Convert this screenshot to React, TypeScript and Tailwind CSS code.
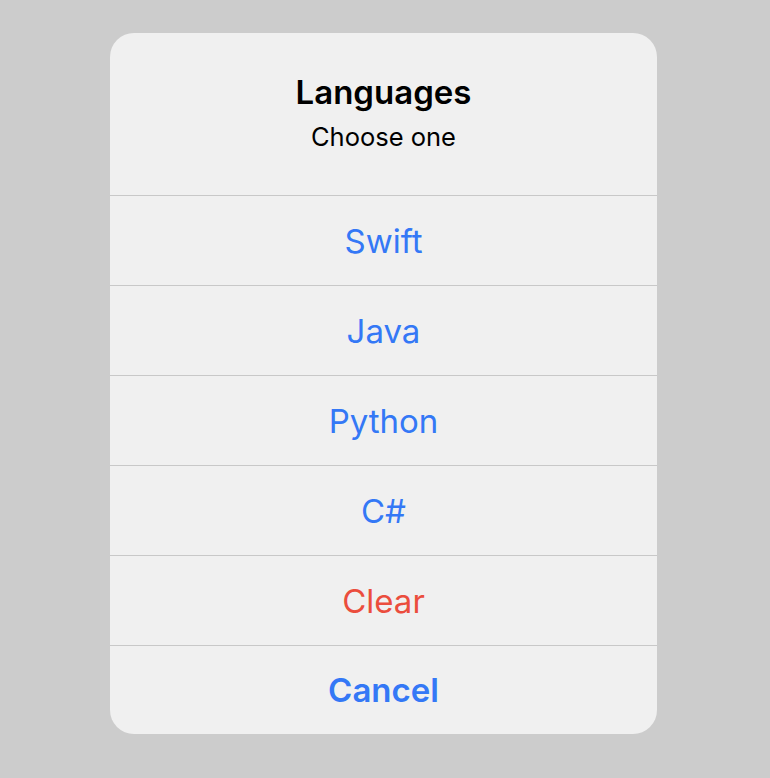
import React from "react";

const items = [
  { label: "Swift", cls: "text-[#3478f6]" },
  { label: "Java", cls: "text-[#3478f6]" },
  { label: "Python", cls: "text-[#3478f6]" },
  { label: "C#", cls: "text-[#3478f6]" },
  { label: "Clear", cls: "text-[#eb4d3d]" },
];

export default function App() {
  return (
    <div
      className="w-[770px] h-[778px] bg-[#cccccc] flex pl-[110px] pt-[33px]"
      style={{ fontFamily: "Inter, 'Noto Sans', sans-serif" }}
    >
      <div className="w-[547px] h-[701px] bg-[#f0f0f0] rounded-[24px] overflow-hidden flex flex-col">
        <div className="h-[163px] shrink-0 flex flex-col items-center pt-[39px] border-b border-[#c8c8c8]">
          <div className="text-[33px] leading-[40px] font-semibold text-black">Languages</div>
          <div className="text-[25.5px] leading-[32px] text-black mt-[9px]">Choose one</div>
        </div>
        {items.map((it) => (
          <div
            key={it.label}
            className={`h-[90px] shrink-0 flex items-center justify-center pt-[2px] border-b border-[#c8c8c8] text-[33px] ${it.cls}`}
          >
            {it.label}
          </div>
        ))}
        <div className="flex-1 flex items-center justify-center pt-[2px] text-[33px] font-semibold text-[#3478f6]">
          Cancel
        </div>
      </div>
    </div>
  );
}
